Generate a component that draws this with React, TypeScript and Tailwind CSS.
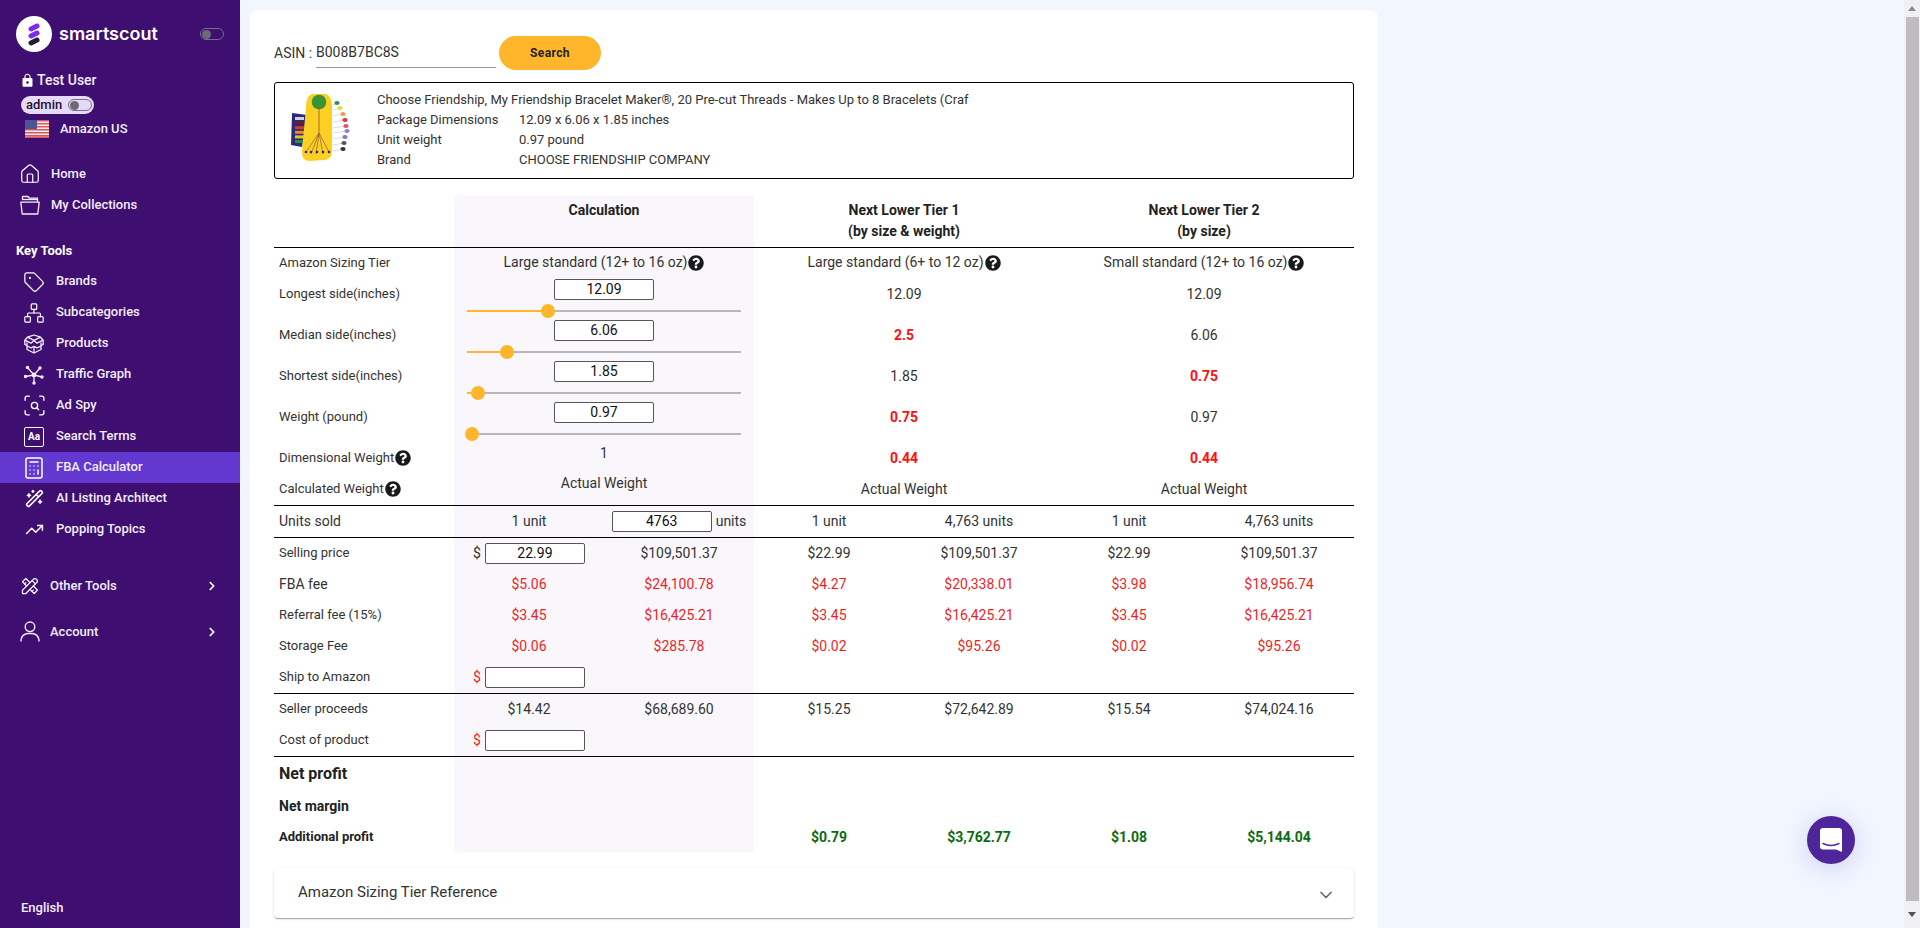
import React from "react";
import { House, Tag, Network, ScanSearch, Calculator, WandSparkles, TrendingUp, ChevronRight, ChevronDown } from "lucide-react";
import { FaQuestionCircle } from "react-icons/fa";
import { MdLock } from "react-icons/md";
import { TbTools } from "react-icons/tb";

const Logo = () => (
  <svg width="36" height="36" viewBox="0 0 36 36" className="shrink-0">
    <circle cx="18" cy="18" r="18" fill="#fff" />
    <path d="M15 13 L21 10" stroke="#7c2bf2" strokeWidth="5" strokeLinecap="round" />
    <path d="M15 20 L21 17" stroke="#7c2bf2" strokeWidth="5" strokeLinecap="round" />
    <path d="M15 27 L21 24" stroke="#231a33" strokeWidth="5" strokeLinecap="round" />
  </svg>
);

const Toggle = ({ border, knob, className }: { border: string; knob: string; className?: string }) => (
  <span className={`flex h-[12px] w-[24px] items-center rounded-full border ${border} ${className ?? ""}`}>
    <span className={`ml-[1px] h-[9px] w-[9px] rounded-full ${knob}`} />
  </span>
);

const Flag = () => (
  <svg width="24" height="18" viewBox="0 0 24 18" className="shrink-0">
    <rect width="24" height="18" fill="#f4eef0" />
    {[0, 3, 6, 9, 12, 15].map((y) => (
      <rect key={y} y={y} width="24" height="1.5" fill="#d8555a" />
    ))}
    <rect y="16.5" width="24" height="1.5" fill="#d8555a" />
    <rect width="12" height="9" fill="#4a5594" />
  </svg>
);

const FolderIcon = () => (
  <svg width="20" height="20" viewBox="0 0 20 20" fill="none" stroke="currentColor" strokeWidth="1.3" strokeLinejoin="round" className="shrink-0">
    <path d="M2.5 5 V1.5 H8 L9.5 3.2 H17.5 V7" />
    <path d="M2.5 4.5 H17.5" />
    <path d="M.8 7.2 H19.2 L17.8 19 H2.2 Z" />
  </svg>
);

const BoxesIcon = () => (
  <svg width="20" height="20" viewBox="0 0 20 20" fill="none" stroke="currentColor" strokeWidth="1.3" strokeLinejoin="round" className="shrink-0">
    <path d="M10 1 L3.5 3.2 L.8 6.2 L7 9.2 L10 6.4 L13 9.2 L19.2 6.2 L16.5 3.2 Z" />
    <path d="M3.5 3.2 L10 6.4 L16.5 3.2" />
    <path d="M.8 6.2 V10.5 L3 11.6 M19.2 6.2 V10.5 L17 11.6" />
    <path d="M3 8.5 V15.5 L10 19 L17 15.5 V8.5" />
    <path d="M3 12 L7 13.8 L10 12.4 L13 13.8 L17 12" />
    <path d="M10 12.4 V19" />
  </svg>
);

const TrafficIcon = () => (
  <svg width="20" height="20" viewBox="0 0 20 20" fill="none" stroke="currentColor" strokeWidth="1.3" className="shrink-0">
    <path d="M10 10 L3.5 2.5 M10 10 L16 3 M10 10 L1.5 11.5 M10 10 L18 12 M10 10 L10 18" />
    <g fill="currentColor" stroke="none">
      <circle cx="10" cy="10" r="2.4" />
      <circle cx="3.5" cy="2.5" r="1.7" />
      <circle cx="16" cy="3" r="1.7" />
      <circle cx="1.5" cy="11.5" r="1.7" />
      <circle cx="18" cy="12" r="1.7" />
      <circle cx="10" cy="18" r="1.7" />
    </g>
  </svg>
);

const UserIcon = () => (
  <svg width="20" height="21" viewBox="0 0 20 21" fill="none" stroke="currentColor" strokeWidth="1.4" className="shrink-0">
    <circle cx="10" cy="5.8" r="4.8" />
    <path d="M1 20.5 V19 A7 7 0 0 1 8 12.5 H12 A7 7 0 0 1 19 19 V20.5" />
  </svg>
);

const AaIcon = () => (
  <span className="flex h-[20px] w-[20px] shrink-0 items-center justify-center rounded-[2px] border border-white text-[10px] font-bold leading-none text-white">
    Aa
  </span>
);

const Nav = ({ icon, label, active }: { icon: React.ReactNode; label: string; active?: boolean }) => (
  <div className={`flex h-[31px] items-center gap-[12px] pl-[24px] ${active ? "bg-[#6238d0]" : ""}`}>
    <span className="flex w-[20px] justify-center">{icon}</span>
    <span className="pb-[2px]">{label}</span>
  </div>
);

const ProductImage = () => (
  <svg width="80" height="90" viewBox="280 85 80 90" className="shrink-0">
    <path d="M292 112 L307 114 L302 146 L291 144 Z" fill="#2a2a78" />
    {["#d0d0d8", "#6b1f1f", "#d93a2e", "#e88a1c", "#e6c81c", "#2f8f3a"].map((c, i) => (
      <rect key={c} x={295} y={116 + i * 4.6} width="9" height="3" fill={c} />
    ))}
    <path d="M312 93 H326 Q332 95 332 106 L332 150 Q332 158 325 159 L309 160 Q301 159 302 150 L306 106 Q306 95 312 93 Z" fill="#fcd022" />
    <circle cx="319" cy="101" r="7.3" fill="#3c9133" />
    <path d="M319 108 V132" stroke="#a86a3a" strokeWidth="1" />
    <path d="M319 132 L306 151 M319 132 L311 153 M319 132 L316 153 M319 132 L323 153 M319 132 L329 151" stroke="#9a6b3a" strokeWidth=".8" />
    {[306, 311, 317, 323, 329].map((x) => (
      <circle key={x} cx={x} cy={151} r="1.3" fill="#2e2a80" />
    ))}
    {[
      ["#2f8f5a", 337, 102],
      ["#f0d83a", 340, 107],
      ["#f09a5a", 343, 113],
      ["#d8343a", 345, 119],
      ["#e05060", 346, 125],
      ["#8a80d0", 347, 130],
      ["#7a78c8", 345, 136],
      ["#555555", 344, 142],
      ["#333333", 343, 148],
    ].map(([c, x, y]) => (
      <g key={String(c)}>
        <path d={`M333 ${Number(y) + 2} L${x} ${y}`} stroke="#bbb" strokeWidth=".5" />
        <ellipse cx={Number(x)} cy={Number(y)} rx="2.6" ry="1.9" fill={String(c)} />
      </g>
    ))}
  </svg>
);

const Help = () => <FaQuestionCircle className="h-[16px] w-[16px] shrink-0 text-[#1a1a1a]" />;

const NumBox = ({ value, className }: { value?: string; className?: string }) => (
  <input
    readOnly
    value={value ?? ""}
    className={`h-[21px] w-[100px] rounded-[2px] border border-[#555] bg-white text-center text-[14px] text-[#111] outline-none ${className ?? ""}`}
  />
);

const Slider = ({ pct }: { pct: number }) => (
  <div className="relative mx-auto mt-[4px] flex h-[14px] w-[274px] items-center bg-transparent">
    <div className="h-[2px] w-full bg-[#b9b7ba]" />
    <div className="absolute left-0 top-[6px] h-[2px] bg-[#ffb62b]" style={{ width: `${pct}px` }} />
    <div className="absolute top-0 h-[14px] w-[14px] rounded-full bg-[#ffb62b]" style={{ left: `${pct - 7}px` }} />
  </div>
);

const calc = "bg-[#f9f7fb]";
const line = "border-b border-black";
const red = "text-[#f01f1f]";
const boldRed = "font-bold text-[#ff1010]";
const green = "font-bold text-[#0b6b12]";

const Label = ({ children, className }: { children: React.ReactNode; className?: string }) => (
  <td className={`pl-[5px] text-left text-[13px] ${className ?? ""}`}>{children}</td>
);

const MoneyRow = ({ label, values, tone, h, border }: { label: string; values: string[]; tone?: string; h: string; border?: boolean }) => (
  <tr>
    <Label className={`${h} ${border ? line : ""}`}>{label}</Label>
    {values.map((v, i) => (
      <td key={i} className={`${tone ?? ""} ${i < 2 ? calc : ""} ${border ? line : ""}`}>{v}</td>
    ))}
  </tr>
);

const SliderRow = ({ label, input, pct, t1, t2, t1Red, t2Red }: { label: string; input: string; pct: number; t1: string; t2: string; t1Red?: boolean; t2Red?: boolean }) => (
  <tr>
    <Label className="h-[41px] pt-[7px] align-top">{label}</Label>
    <td colSpan={2} className={`${calc} pt-[2px] align-top`}>
      <NumBox value={input} className="block mx-auto" />
      <Slider pct={pct} />
    </td>
    <td colSpan={2} className={`pt-[7px] align-top ${t1Red ? boldRed : ""}`}>{t1}</td>
    <td colSpan={2} className={`pt-[7px] align-top ${t2Red ? boldRed : ""}`}>{t2}</td>
  </tr>
);

const Tier = ({ children }: { children: string }) => (
  <span className="inline-flex items-center gap-[1px]">
    {children}
    <Help />
  </span>
);

const Dollar = ({ tone, value }: { tone?: string; value?: string }) => (
  <div className="flex items-center justify-center gap-[4px]">
    <span className={tone}>$</span>
    <NumBox value={value} />
  </div>
);

export default function App() {
  const wh = "h-[19px] w-[19px] shrink-0 text-white";
  return (
    <div className="flex h-screen w-full overflow-hidden bg-[#f1f6ff] font-['Roboto',sans-serif]">
      {/* Sidebar */}
      <aside className="flex h-full w-[240px] shrink-0 flex-col bg-[#3e0f70] text-[13px] font-medium text-[#f3edfb]">
        <div className="mt-[16px] flex h-[36px] items-center pl-[16px] pr-[16px]">
          <Logo />
          <span className="ml-[7px] font-['Inter',sans-serif] text-[18px] font-semibold leading-none text-white">smartscout</span>
          <Toggle border="border-[#7a6a90]" knob="bg-[#6d6a73]" className="ml-auto" />
        </div>
        <div className="mt-[18px] flex h-[20px] items-center gap-[2px] pl-[20px] text-[14px]">
          <MdLock className="h-[15px] w-[15px] text-white" />
          <span>Test User</span>
        </div>
        <div className="ml-[21px] mt-[6px] flex h-[18px] w-[73px] items-center rounded-full bg-[#e6dafa] pl-[5px] text-[13px] text-[#1c1230]">
          <span>admin</span>
          <Toggle border="border-[#77707f]" knob="bg-[#6d6a73]" className="ml-[6px]" />
        </div>
        <div className="mt-[5px] flex h-[20px] items-center gap-[11px] pl-[25px]">
          <Flag />
          <span>Amazon US</span>
        </div>
        <div className="mt-[19px] flex h-[31px] items-center gap-[11px] pl-[20px]">
          <House className="-mx-[1px] h-[22px] w-[22px] shrink-0 text-white" strokeWidth={1.3} />
          <span>Home</span>
        </div>
        <div className="flex h-[31px] items-center gap-[11px] pl-[20px]">
          <FolderIcon />
          <span>My Collections</span>
        </div>
        <div className="ml-[16px] mt-[21px] flex h-[20px] items-center font-bold text-white">Key Tools</div>
        <div className="mt-[5px]">
          <Nav icon={<Tag className="h-[22px] w-[22px] shrink-0 text-white" strokeWidth={1.3} />} label="Brands" />
          <Nav icon={<Network className="h-[22px] w-[22px] shrink-0 text-white" strokeWidth={1.3} />} label="Subcategories" />
          <Nav icon={<BoxesIcon />} label="Products" />
          <Nav icon={<TrafficIcon />} label="Traffic Graph" />
          <Nav icon={<ScanSearch className="h-[25px] w-[25px] shrink-0 text-white" strokeWidth={1.3} />} label="Ad Spy" />
          <Nav icon={<AaIcon />} label="Search Terms" />
          <Nav icon={<Calculator className="h-[24px] w-[24px] shrink-0 text-white" strokeWidth={1.5} />} label="FBA Calculator" active />
          <Nav icon={<WandSparkles className={wh} strokeWidth={2} />} label="AI Listing Architect" />
          <Nav icon={<TrendingUp className={wh} strokeWidth={1.9} />} label="Popping Topics" />
        </div>
        <div className="mt-[25px] flex h-[31px] items-center gap-[10px] pl-[20px] pr-[21px]">
          <TbTools className="h-[20px] w-[20px] shrink-0 text-white" strokeWidth={1.5} />
          <span>Other Tools</span>
          <ChevronRight className="ml-auto h-[14px] w-[14px] text-white" strokeWidth={3} />
        </div>
        <div className="mt-[15px] flex h-[31px] items-center gap-[10px] pl-[20px] pr-[21px]">
          <UserIcon />
          <span>Account</span>
          <ChevronRight className="ml-auto h-[14px] w-[14px] text-white" strokeWidth={3} />
        </div>
        <div className="mb-[10px] ml-[21px] mt-auto flex h-[20px] items-center">English</div>
      </aside>

      {/* Main */}
      <main className="min-w-0 flex-1 pl-[10px] pt-[10px]">
        <div className="w-[1128px] rounded-[8px] bg-white px-[24px] pb-[40px] pt-[26px] text-[14px] text-[#333]">
          <div className="flex h-[34px] items-center">
            <span className="w-[42px]">ASIN :</span>
            <span className="flex h-[30px] w-[180px] items-center border-b border-[#999] pb-[2px] pt-[2px]">B008B7BC8S</span>
            <button className="ml-[3px] h-[34px] w-[102px] rounded-full bg-[#ffb62b] text-[12px] font-bold tracking-[0.4px] text-[#222]">Search</button>
          </div>

          <div className="mt-[12px] flex h-[97px] items-center gap-[17px] rounded-[3px] border border-black pl-[5px] text-[13px] leading-[20px]">
            <ProductImage />
            <div className="pb-[2px]">
              <div>Choose Friendship, My Friendship Bracelet Maker®, 20 Pre-cut Threads - Makes Up to 8 Bracelets (Craf</div>
              <div className="flex"><span className="w-[142px]">Package Dimensions</span><span>12.09 x 6.06 x 1.85 inches</span></div>
              <div className="flex"><span className="w-[142px]">Unit weight</span><span>0.97 pound</span></div>
              <div className="flex"><span className="w-[142px]">Brand</span><span>CHOOSE FRIENDSHIP COMPANY</span></div>
            </div>
          </div>

          <table className="mt-[16px] w-[1080px] table-fixed border-separate border-spacing-0 text-center text-[14px]">
            <colgroup>
              <col className="w-[180px]" />
              <col className="w-[150px]" /><col className="w-[150px]" />
              <col className="w-[150px]" /><col className="w-[150px]" />
              <col className="w-[150px]" /><col className="w-[150px]" />
            </colgroup>
            <tbody>
              <tr className="font-bold text-[#222]">
                <td className={`h-[53px] ${line}`} />
                <td colSpan={2} className={`${calc} ${line} pt-[5px] align-top leading-[21px]`}>Calculation</td>
                <td colSpan={2} className={`${line} pt-[5px] align-top leading-[21px]`}>Next Lower Tier 1<br />(by size &amp; weight)</td>
                <td colSpan={2} className={`${line} pt-[5px] align-top leading-[21px]`}>Next Lower Tier 2<br />(by size)</td>
              </tr>
              <tr>
                <Label className="h-[29px]">Amazon Sizing Tier</Label>
                <td colSpan={2} className={calc}><Tier>Large standard (12+ to 16 oz)</Tier></td>
                <td colSpan={2}><Tier>Large standard (6+ to 12 oz)</Tier></td>
                <td colSpan={2}><Tier>Small standard (12+ to 16 oz)</Tier></td>
              </tr>
              <SliderRow label="Longest side(inches)" input="12.09" pct={81} t1="12.09" t2="12.09" />
              <SliderRow label="Median side(inches)" input="6.06" pct={40} t1="2.5" t1Red t2="6.06" />
              <SliderRow label="Shortest side(inches)" input="1.85" pct={11} t1="1.85" t2="0.75" t2Red />
              <SliderRow label="Weight (pound)" input="0.97" pct={5} t1="0.75" t1Red t2="0.97" />
              <tr>
                <Label className="h-[31px] pt-[2px]">
                  <span className="inline-flex items-center gap-[1px]">Dimensional Weight<Help /></span>
                </Label>
                <td colSpan={2} className={`${calc} pb-[6px]`}>1</td>
                <td colSpan={2} className={`${boldRed} pt-[3px]`}>0.44</td>
                <td colSpan={2} className={`${boldRed} pt-[3px]`}>0.44</td>
              </tr>
              <tr>
                <Label className={`h-[34px] ${line}`}>
                  <span className="inline-flex items-center gap-[1px]">Calculated Weight<Help /></span>
                </Label>
                <td colSpan={2} className={`${calc} ${line} pb-[10px]`}>Actual Weight</td>
                <td colSpan={2} className={`${line} pt-[1px]`}>Actual Weight</td>
                <td colSpan={2} className={`${line} pt-[1px]`}>Actual Weight</td>
              </tr>
              <tr>
                <Label className={`h-[32px] ${line} !text-[14px]`}>Units sold</Label>
                <td className={`${calc} ${line}`}>1 unit</td>
                <td className={`${calc} ${line}`}>
                  <div className="flex items-center justify-center gap-[4px]">
                    <NumBox value="4763" />
                    <span>units</span>
                  </div>
                </td>
                <td className={line}>1 unit</td>
                <td className={line}>4,763 units</td>
                <td className={line}>1 unit</td>
                <td className={line}>4,763 units</td>
              </tr>
              <tr>
                <Label className="h-[31px] pb-[2px]">Selling price</Label>
                <td className={calc}><Dollar value="22.99" /></td>
                <td className={calc}>$109,501.37</td>
                <td>$22.99</td>
                <td>$109,501.37</td>
                <td>$22.99</td>
                <td>$109,501.37</td>
              </tr>
              <MoneyRow h="h-[31px] !text-[14px]" label="FBA fee" tone={red} values={["$5.06", "$24,100.78", "$4.27", "$20,338.01", "$3.98", "$18,956.74"]} />
              <MoneyRow h="h-[31px] pb-[2px]" label="Referral fee (15%)" tone={red} values={["$3.45", "$16,425.21", "$3.45", "$16,425.21", "$3.45", "$16,425.21"]} />
              <MoneyRow h="h-[31px] pb-[2px]" label="Storage Fee" tone={red} values={["$0.06", "$285.78", "$0.02", "$95.26", "$0.02", "$95.26"]} />
              <tr>
                <Label className={`h-[32px] pb-[2px] ${line}`}>Ship to Amazon</Label>
                <td className={`${calc} ${line}`}><Dollar tone={red} /></td>
                <td className={`${calc} ${line}`} />
                <td className={line} /><td className={line} /><td className={line} /><td className={line} />
              </tr>
              <MoneyRow h="h-[31px] pb-[2px]" label="Seller proceeds" values={["$14.42", "$68,689.60", "$15.25", "$72,642.89", "$15.54", "$74,024.16"]} />
              <tr>
                <Label className={`h-[32px] pb-[2px] ${line}`}>Cost of product</Label>
                <td className={`${calc} ${line}`}><Dollar tone={red} /></td>
                <td className={`${calc} ${line}`} />
                <td className={line} /><td className={line} /><td className={line} /><td className={line} />
              </tr>
              <tr>
                <Label className="h-[33px] !text-[16px] font-bold text-[#222]">Net profit</Label>
                <td colSpan={2} className={calc} />
                <td colSpan={4} />
              </tr>
              <tr>
                <Label className="h-[32px] !text-[14px] font-bold text-[#222]">Net margin</Label>
                <td colSpan={2} className={calc} />
                <td colSpan={4} />
              </tr>
              <tr>
                <Label className="h-[31px] pb-[2px] font-bold text-[#222]">Additional profit</Label>
                <td colSpan={2} className={calc} />
                <td className={green}>$0.79</td>
                <td className={green}>$3,762.77</td>
                <td className={green}>$1.08</td>
                <td className={green}>$5,144.04</td>
              </tr>
            </tbody>
          </table>

          <div className="mt-[15px] flex h-[50px] items-center justify-between rounded-[4px] bg-white pl-[24px] pr-[18px] text-[15px] shadow-[0_2px_1px_-1px_rgba(0,0,0,0.2),0_1px_1px_0_rgba(0,0,0,0.14),0_1px_3px_0_rgba(0,0,0,0.12)]">
            <span className="pb-[2px]">Amazon Sizing Tier Reference</span>
            <ChevronDown className="mt-[3px] h-[20px] w-[20px] text-[#666]" strokeWidth={2} />
          </div>
        </div>
      </main>

      {/* Scrollbar */}
      <div className="flex h-full w-[16px] shrink-0 flex-col items-center bg-[#f1f0f2]">
        <div className="flex h-[17px] items-center justify-center">
          <svg width="8" height="5" viewBox="0 0 8 5"><path d="M4 0 L8 5 H0 Z" fill="#8a888c" /></svg>
        </div>
        <div className="ml-[1px] h-[884px] w-[13px] bg-[#bebcbe]" />
        <div className="flex flex-1 items-center justify-center">
          <svg width="8" height="5" viewBox="0 0 8 5"><path d="M0 0 H8 L4 5 Z" fill="#505052" /></svg>
        </div>
      </div>

      {/* Chat bubble */}
      <div className="fixed left-[1807px] top-[816px] flex h-[48px] w-[48px] items-center justify-center rounded-full bg-[#4f259a] shadow-[0_4px_24px_rgba(60,40,160,0.18)]">
        <svg width="22" height="24" viewBox="0 0 22 24">
          <path d="M3 0 H19 Q22 0 22 3 V24 L16 21.5 H3 Q0 21.5 0 18.5 V3 Q0 0 3 0 Z" fill="#fff" />
          <path d="M3 15.5 Q11 19.5 19 15.5" stroke="#4f259a" strokeWidth="1.4" fill="none" strokeLinecap="round" />
        </svg>
      </div>
    </div>
  );
}
